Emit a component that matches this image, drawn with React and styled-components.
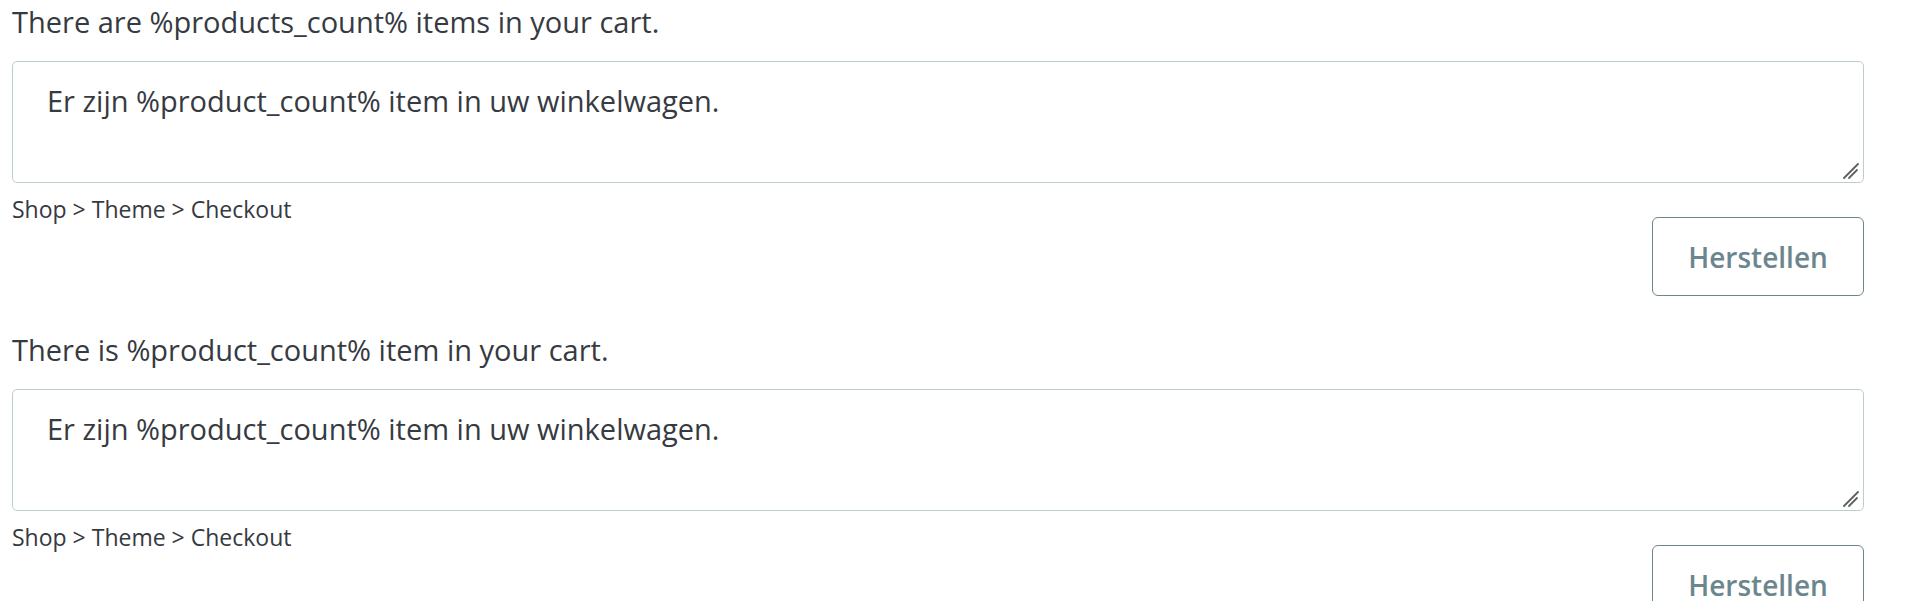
import React from 'react';
import styled, { createGlobalStyle } from 'styled-components';

const GlobalStyle = createGlobalStyle`
body {
  margin: 0;
  background: #fff;
  font-family: "Open Sans", "DejaVu Sans", sans-serif;
}
`;

const Page = styled.div`
display: flex;
flex-direction: column;
gap: 36px;
padding: 4px 56px 0 12px;
`;

const Field = styled.div`
display: flex;
flex-direction: column;
`;

const Label = styled.label`
font-size: 29px;
line-height: 36px;
color: #363a41;
margin-bottom: 21px;
`;

const TextWrap = styled.div`
position: relative;
`;

const TextArea = styled.textarea`
display: block;
box-sizing: border-box;
width: 100%;
height: 122px;
padding: 21px 34px;
font-family: inherit;
font-size: 29px;
line-height: 36px;
color: #363a41;
border: 1px solid #bbcdd2;
border-radius: 5px;
resize: none;
outline: none;
`;

const Grip = styled.svg`
position: absolute;
right: 1px;
bottom: 2px;
width: 20px;
height: 20px;
pointer-events: none;
`;

const Help = styled.small`
font-size: 23px;
line-height: 20px;
color: #363a41;
margin-top: 16px;
`;

const Actions = styled.div`
display: flex;
justify-content: flex-end;
margin-top: -2px;
`;

const Button = styled.button`
width: 212px;
height: 79px;
font-family: inherit;
font-size: 28px;
font-weight: 600;
color: #6c868e;
background: #fff;
border: 1.5px solid #6c868e;
border-radius: 6px;
cursor: pointer;
`;

const rows = [
  { label: 'There are %products_count% items in your cart.', value: 'Er zijn %product_count% item in uw winkelwagen.' },
  { label: 'There is %product_count% item in your cart.', value: 'Er zijn %product_count% item in uw winkelwagen.' },
];

const App = () => {
  return (
    <>
      <GlobalStyle />
      <Page>
        {rows.map((row, i) => (
          <Field key={i}>
            <Label>{row.label}</Label>
            <TextWrap>
              <TextArea defaultValue={row.value} />
              <Grip viewBox="0 0 20 20">
                <path d="M1 17 L15 3" stroke="#5f5f5f" strokeWidth="1.8" strokeLinecap="round" />
                <path d="M6 17 L14 9" stroke="#5f5f5f" strokeWidth="1.8" strokeLinecap="round" />
              </Grip>
            </TextWrap>
            <Help>Shop &gt; Theme &gt; Checkout</Help>
            <Actions>
              <Button type="button">Herstellen</Button>
            </Actions>
          </Field>
        ))}
      </Page>
    </>
  );
};

export default App;
